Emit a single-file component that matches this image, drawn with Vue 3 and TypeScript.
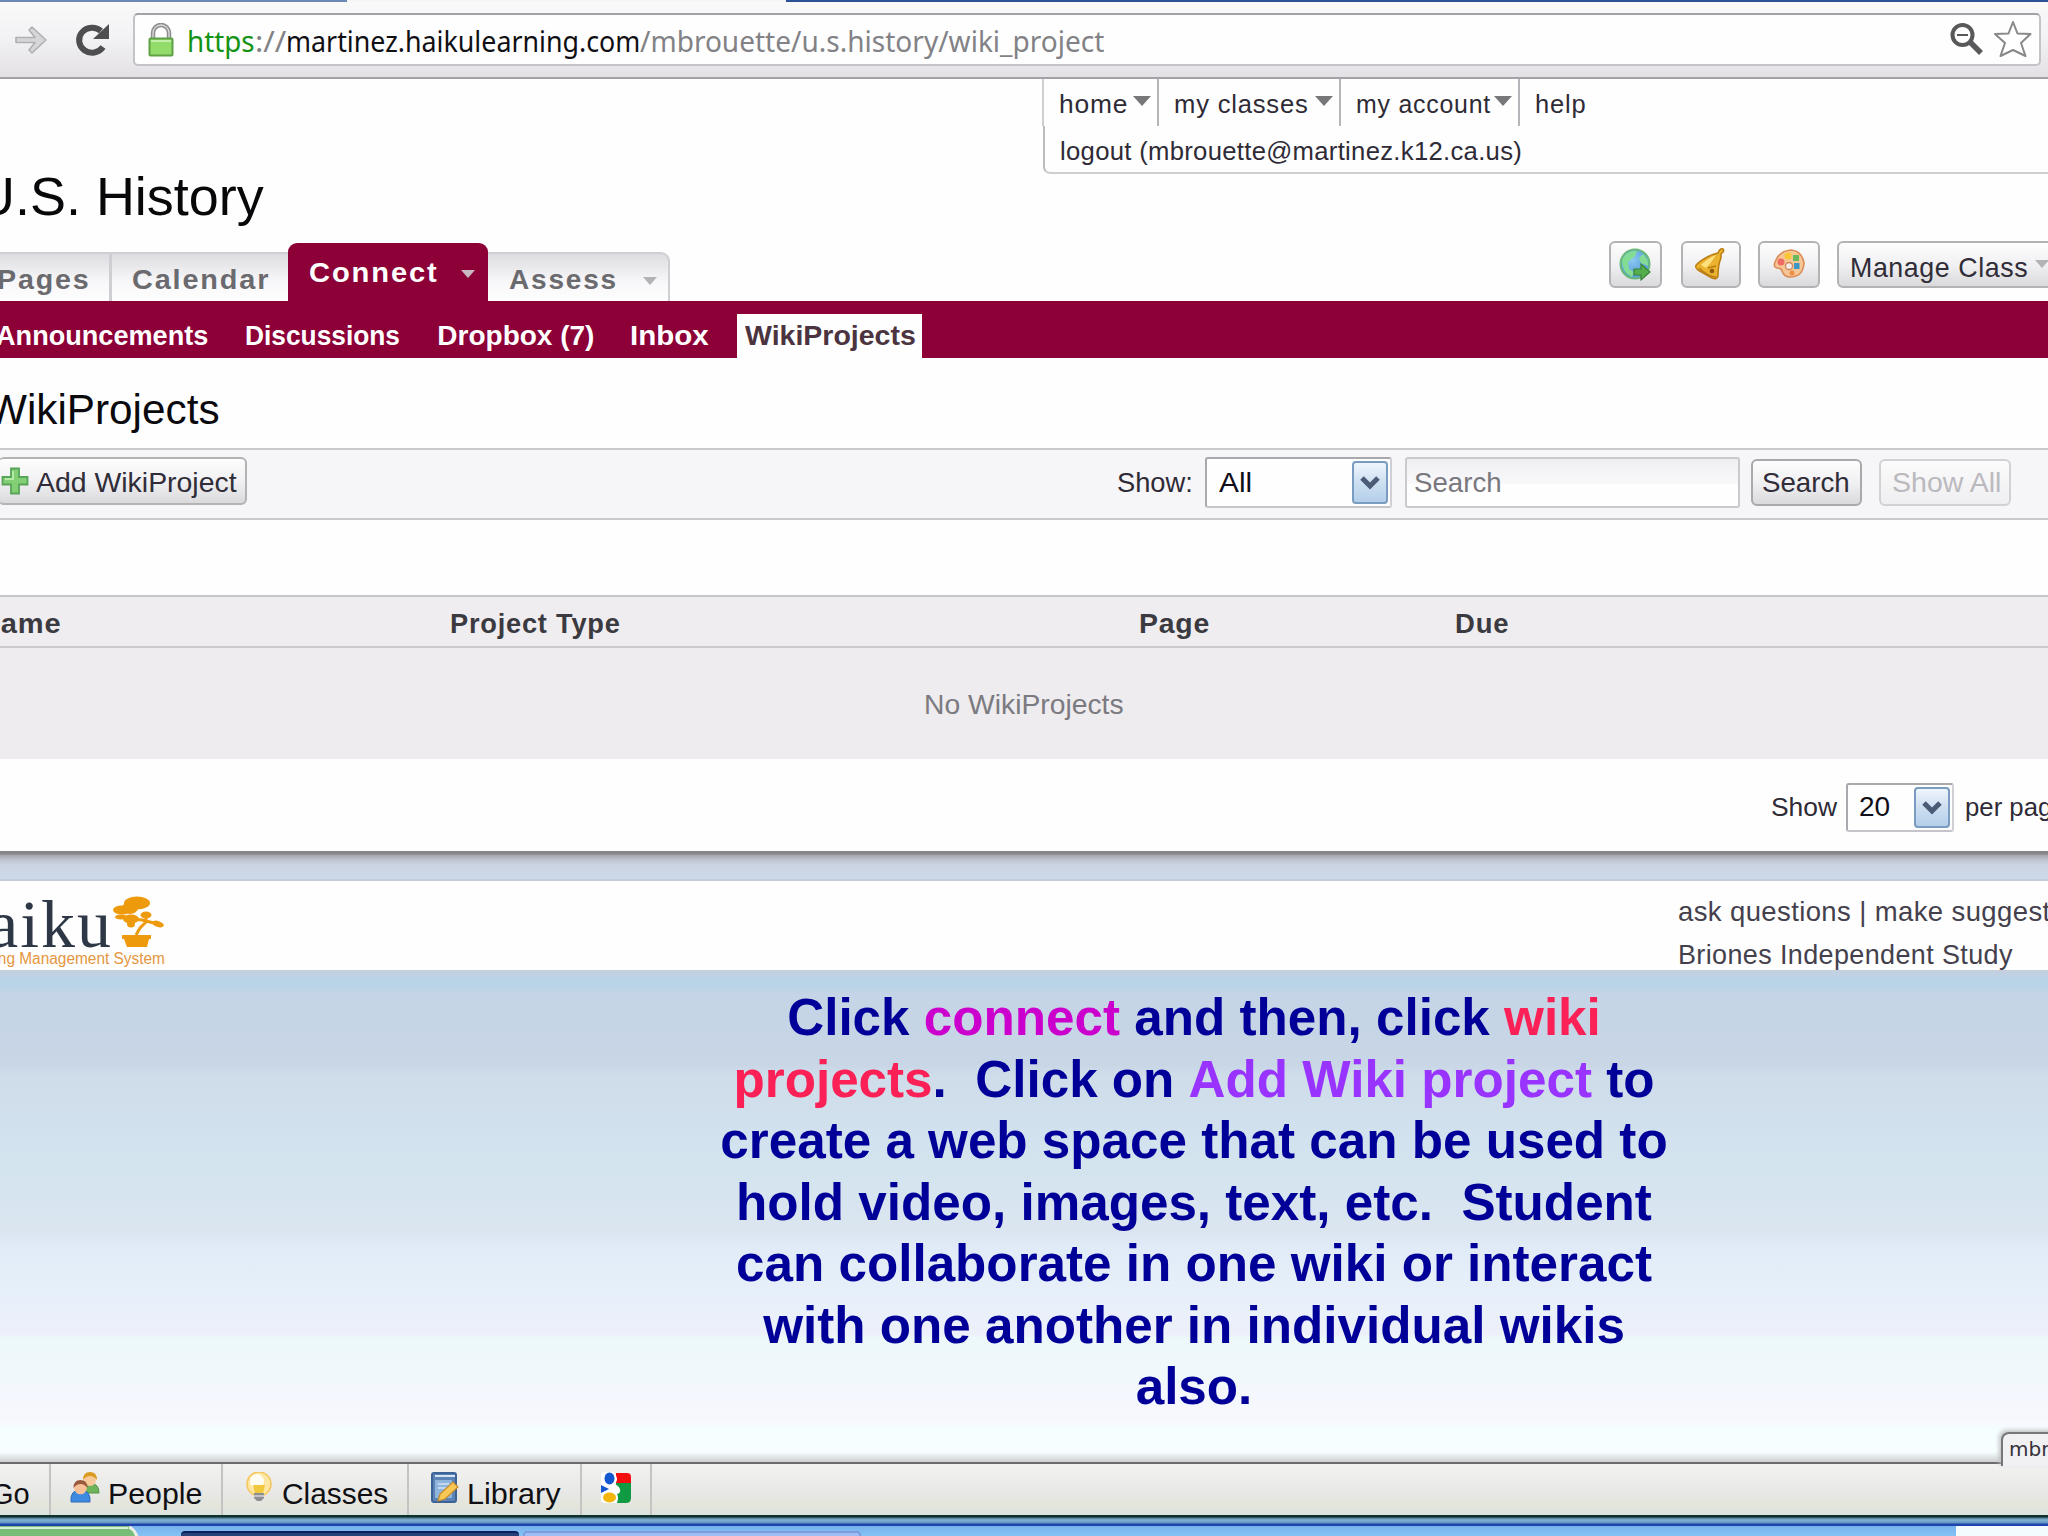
<script setup lang="ts">
import type { Directive } from 'vue'

// Condenses or widens a label so that it takes exactly the given width.
const vFit: Directive<HTMLElement, number> = {
  mounted(el, { value }) {
    const natural = el.offsetWidth
    el.style.transform = `scaleX(${value / natural})`
    el.style.marginRight = `${value - natural}px`
  },
}

interface Item { label: string; left: number; width: number }

const menu = [
  { label: 'home', left: 15, width: 69, cell: 115 },
  { label: 'my classes', left: 15, width: 135, cell: 182 },
  { label: 'my account', left: 15, width: 135, cell: 179 },
]
const sections: Item[] = [
  { label: 'Announcements', left: -4, width: 212 },
  { label: 'Discussions', left: 37, width: 155 },
  { label: 'Dropbox (7)', left: 37, width: 157 },
  { label: 'Inbox', left: 36, width: 79 },
]
</script>

<template>
  <div class="screen">
    <div class="chrome-top"><i class="t1"></i><i class="t2"></i><i class="t3"></i></div>
    <div class="chrome">
      <svg class="fwd" width="34" height="32" viewBox="0 0 34 32"><path d="M2 13.500h19l-6-7.500 3-3 14 13-14 13-3-3 6-7.500H2z" fill="#d6d5d8" stroke="#b1b0b4" stroke-width="1.600" stroke-linejoin="round" /></svg>
      <svg class="reload" width="36" height="34" viewBox="0 0 36 34"><path d="M28 24A13 12.5 0 1 1 26 8" fill="none" stroke="#4e4e50" stroke-width="6" /><path d="M34 1v15H18z" fill="#4e4e50" /></svg>
      <div class="url">
        <svg class="lock" width="26" height="36" viewBox="0 0 26 36"><path d="M5 16V10a8 8 0 0 1 16 0v6" fill="none" stroke="#8f8f91" stroke-width="4.5" /><path d="M5 16V10a8 8 0 0 1 16 0v6" fill="none" stroke="#dcdcdc" stroke-width="1.3" /><rect x="1.5" y="15.500" width="23" height="17" rx="1" fill="#92dc6c" stroke="#5fa044" stroke-width="2" /><path d="M3 18h20" stroke="#c3f0a8" stroke-width="2" /></svg>
        <span class="address"><b v-fit="68">https</b><i v-fit="31">://</i><em v-fit="354">martinez.haikulearning.com</em><i v-fit="464">/mbrouette/u.s.history/wiki_project</i></span>
        <svg class="mag" width="36" height="36" viewBox="0 0 36 36"><circle cx="13.500" cy="13" r="10" fill="#fff" stroke="#59595b" stroke-width="4" /><path d="M8 13h11" stroke="#59595b" stroke-width="2" /><path d="M21 20l11 11" stroke="#59595b" stroke-width="5.500" /></svg>
        <svg class="star" width="40" height="40" viewBox="0 0 40 40"><path d="M20 3l4.500 11.500 13 .5-9.500 9 4.500 13L20 31 7.500 37 12 24 2 15l13.500-.5z" fill="#fff" stroke="#88888b" stroke-width="2" stroke-linejoin="round" /></svg>
      </div>
    </div>

    <header>
      <nav class="account">
        <div class="account-row">
          <div v-for="m in menu" :key="m.label" class="cell" :style="{ width: m.cell + 'px' }">
            <span v-fit="m.width">{{ m.label }}</span><i class="tri"></i>
          </div>
          <div class="cell last"><span v-fit="51">help</span></div>
        </div>
        <div class="logout"><span v-fit="462">logout (mbrouette@martinez.k12.ca.us)</span></div>
      </nav>
      <h1><span v-fit="288">U.S. History</span></h1>
      <div class="tabrow">
        <div class="tab pages"><span v-fit="94">Pages</span></div>
        <div class="tab calendar"><span v-fit="138">Calendar</span></div>
        <div class="tab active"><span v-fit="130">Connect</span><i class="tri pale"></i></div>
        <div class="tab assess"><span v-fit="109">Assess</span><i class="tri grey"></i></div>
        <div class="tools">
          <div class="btn w53"><svg width="34" height="34" viewBox="0 0 34 34"><defs><radialGradient id="globe" cx=".4" cy=".35"><stop offset="0" stop-color="#8ec9f4" /><stop offset="1" stop-color="#5ba3d8" /></radialGradient></defs><circle cx="16" cy="16" r="14.500" fill="url(#globe)" stroke="#69ba78" stroke-width="2" /><path d="M3 12Q8 2 18 3l-2 5-7 6 1 7 5 3-2 5Q3 25 3 12zM20 10l4-4q6 5 5 12l-7-3z" fill="#83dc93" /><path d="M15 21h7v-5l9 8-9 8v-5h-7z" fill="#55ad4c" stroke="#398439" stroke-width="1.200" /></svg></div>
          <div class="btn w60"><svg width="34" height="34" viewBox="0 0 34 34"><path d="M27 6Q31 3 29 1q-3-1-5 4Q12 8 3 16q-3 3 1 6l14 8q5 2 6-2 0-11 3-18z" fill="#eab22f" stroke="#b97e12" stroke-width="1.500" /><path d="M22 7Q14 10 7 17l5 3q6-6 10-13z" fill="#ffe07c" /><path d="M5 20q9 9 17 9M14 20l8-2" fill="none" stroke="#b97e12" stroke-width="1.600" /><circle cx="18" cy="23" r="2.300" fill="#8f5b0c" /></svg></div>
          <div class="btn w62"><svg width="34" height="34" viewBox="0 0 34 34"><path d="M3 14Q7 3 19 2q11 1 13 13-1 14-14 14-6 0-8-6-1-3-5-3-4-1-2-6z" fill="#f7c695" stroke="#d98d57" stroke-width="1.600" /><circle cx="9" cy="14" r="3.500" fill="#ee6b63" /><circle cx="16" cy="8" r="3.500" fill="#fac636" /><rect x="21" y="7" width="6" height="6" fill="#69b859" /><rect x="22" y="15" width="5.500" height="6" fill="#3d97c6" /><circle cx="17" cy="18" r="3.500" fill="#f5eee8" stroke="#cb8459" stroke-width="1.300" /><circle cx="20" cy="25" r="2.500" fill="#ee8d48" /></svg></div>
          <div class="btn manage"><span v-fit="178">Manage Class</span><i class="tri grey"></i></div>
        </div>
      </div>
    </header>

    <nav class="sections">
      <span v-for="s in sections" :key="s.label" class="sec" :style="{ marginLeft: s.left + 'px' }"><span v-fit="s.width">{{ s.label }}</span></span>
      <span class="current"><span v-fit="171">WikiProjects</span></span>
    </nav>

    <h2><span v-fit="233">WikiProjects</span></h2>

    <div class="toolbar">
      <div class="btn add">
        <svg width="28" height="28" viewBox="0 0 28 28"><path d="M10 1.500h8V10h8.500v7.500H18v9h-8v-9H1.500V10H10z" fill="#83cf75" stroke="#58a458" stroke-width="1.800" /><path d="M12 4v8H4" fill="none" stroke="#b7eaa8" stroke-width="2" /></svg>
        <span v-fit="201">Add WikiProject</span>
      </div>
      <span class="show"><span v-fit="76">Show:</span></span>
      <div class="select all"><span v-fit="33">All</span><span class="drop"><svg width="20" height="15" viewBox="0 0 20 15"><path d="M2 3l8 8 8-8" fill="none" stroke="#4b5a75" stroke-width="5" /></svg></span></div>
      <div class="field"><span v-fit="88">Search</span></div>
      <div class="btn search"><span v-fit="88">Search</span></div>
      <div class="btn showall"><span v-fit="109">Show All</span></div>
    </div>

    <div class="thead">
      <span class="c1"><span v-fit="82">Name</span></span>
      <span class="c2"><span v-fit="171">Project Type</span></span>
      <span class="c3"><span v-fit="71">Page</span></span>
      <span class="c4"><span v-fit="54">Due</span></span>
    </div>
    <div class="empty"><span v-fit="200">No WikiProjects</span></div>

    <div class="pager">
      <span v-fit="66">Show</span>
      <div class="select count"><span v-fit="31">20</span><span class="drop"><svg width="20" height="15" viewBox="0 0 20 15"><path d="M2 3l8 8 8-8" fill="none" stroke="#4b5a75" stroke-width="5" /></svg></span></div>
      <span v-fit="102">per page</span>
    </div>
    <div class="band"></div>

    <footer>
      <div class="logo">
        <div class="wordmark">
          <span v-fit="161" class="name">haiku</span>
          <svg width="52" height="54" viewBox="0 0 52 54"><g fill="#ee9a0d"><ellipse cx="24" cy="8" rx="13" ry="6.500" /><ellipse cx="9" cy="15" rx="9" ry="4.500" /><ellipse cx="17" cy="13" rx="8" ry="6" /><ellipse cx="8" cy="22" rx="6" ry="2.500" /><ellipse cx="18" cy="24" rx="8" ry="4.500" /><ellipse cx="18" cy="29" rx="4" ry="3.500" /><ellipse cx="33" cy="20" rx="5.500" ry="3.500" /><ellipse cx="45" cy="29" rx="6" ry="3" transform="rotate(18 45 29)" /><path d="M9 40h29v4h-2l-2 8H14l-3-8H9z" /></g><path d="M19 24l10 1 16 4M33 20v7l-6 6-4 7" fill="none" stroke="#ee9a0d" stroke-width="3" /></svg>
        </div>
        <span v-fit="210" class="tagline">Learning Management System</span>
      </div>
      <div class="links">
        <span v-fit="425">ask questions | make suggestions</span>
        <span v-fit="335">Briones Independent Study</span>
      </div>
    </footer>

    <main>
      <p>Click <b class="magenta">connect</b> and then, click <b class="red">wiki</b><br><b class="red">projects</b>.&nbsp; Click on <b class="violet">Add Wiki project</b> to<br>create a web space that can be used to<br>hold video, images, text, etc.&nbsp; Student<br>can collaborate in one wiki or interact<br>with one another in individual wikis<br>also.</p>
      <div class="usertab">mbrouette</div>
    </main>

    <div class="dock">
      <div class="slot s1"><span v-fit="39">Go</span></div>
      <div class="slot s2">
        <svg width="30" height="32" viewBox="0 0 30 32"><path d="M14 21q0-10 7-10 8 1 8 10z" fill="#6eb45c" stroke="#549647" /><circle cx="20" cy="8" r="6" fill="#f6ca98" /><path d="M13 8q0-8 7-8t7 8q-3-4-7-4t-7 4z" fill="#d99b20" /><path d="M1 30q-1-12 9-12 11 0 10 12z" fill="#3f8be2" stroke="#2c69b8" /><circle cx="10.500" cy="16" r="6.300" fill="#f6c199" /><path d="M3.500 16q0-8 7-8t7 8q-3-4-7-4t-7 4z" fill="#9c5a3c" /></svg>
        <span v-fit="94">People</span>
      </div>
      <div class="slot s3">
        <svg width="28" height="32" viewBox="0 0 28 32"><circle cx="14" cy="12" r="12" fill="#ffe6a0" stroke="#f4c65e" stroke-width="1.500" /><circle cx="12" cy="9" r="7" fill="#fffdf2" /><path d="M8 13h12l-2 8h-8z" fill="#f1c73c" /><path d="M9 21h10v5l-3 3h-4l-3-3z" fill="#8c8e92" /><path d="M9 24h10" stroke="#d5d6d8" stroke-width="1.500" /></svg>
        <span v-fit="106">Classes</span>
      </div>
      <div class="slot s4">
        <svg width="28" height="32" viewBox="0 0 28 32"><rect x="1" y="1" width="24" height="29" rx="2" fill="#5b83b6" stroke="#3d6296" stroke-width="2" /><path d="M4 4h20" stroke="#d6e4f3" stroke-width="2" /><path d="M4 8h17v18H4z" fill="#90b5dc" /><path d="M7 12h11M7 16h8" stroke="#d2e3f4" stroke-width="1.500" /><path d="M7 29l2-7L22 10l5 5-13 12z" fill="#f8c754" stroke="#c68b2b" stroke-width="1.200" /></svg>
        <span v-fit="94">Library</span>
      </div>
      <div class="slot s5">
        <svg width="32" height="32" viewBox="0 0 32 32"><path d="M16 1h11q4 0 4 4v6H16z" fill="#f50d0d" /><path d="M16 11h15v15q0 5-5 5H16z" fill="#109a41" /><path d="M5 0h8q4 3 4 8-1 3-2 4 6 3 5 8-1 2-3 2 2 3 0 9H5q-4 0-4-4V4q0-4 4-4z" fill="#fff" /><ellipse cx="9.500" cy="6.500" rx="5" ry="6" fill="#1358cf" /><path d="M1 13l8 4-8 4z" fill="#1358cf" /><ellipse cx="9.500" cy="25.500" rx="6.500" ry="5" fill="#f4b50b" /></svg>
      </div>
    </div>
    <div class="frame"></div>
    <div class="taskbar">
      <svg class="start" width="145" height="11" viewBox="0 0 145 11"><path d="M0 0h130q5 3 7 11H0z" fill="#76bd78" /><path d="M0 2h128" stroke="#d8efd5" stroke-width="2" /><path d="M129 1q6 3 8 10" fill="none" stroke="#e9efe4" stroke-width="3" /></svg>
      <div class="task dark"></div>
      <div class="task light"></div>
      <div class="tray"></div>
    </div>
  </div>
</template>

<style>
html, body { margin: 0; overflow: hidden; background: #fff; }
</style>

<style scoped>
* { box-sizing: border-box; }
.screen { width: 2048px; height: 1536px; overflow: hidden; display: flex; flex-direction: column; background: #fefefe; font: 28px "Liberation Sans", Arial, sans-serif; color: #2e2b36; }
.screen > * { flex-shrink: 0; }
span { display: inline-block; white-space: nowrap; transform-origin: 0 50%; flex-shrink: 0; }
svg { display: block; flex-shrink: 0; }
h1, h2, p { margin: 0; font-weight: 400; }

.chrome-top { height: 2px; display: flex; }
.t1 { width: 347px; background: #6c88b4; }
.t2 { width: 439px; background: #f5f4f6; }
.t3 { flex: 1; background: #2c5196; }
.chrome { height: 77px; display: flex; align-items: flex-start; padding-top: 11px; background: linear-gradient(#faf9fa, #f3f2f4 45%, #e3e1e5); border-bottom: 2px solid #a3a2a6; }
.fwd { margin: 11px 0 0 14px; }
.reload { margin: 10px 0 0 27px; }
.url { margin-left: 22px; width: 1908px; height: 53px; display: flex; align-items: flex-start; background: #fefefe; border: 2px solid #c4c3c7; border-top-color: #a2a2a6; border-radius: 5px; }
.lock { margin: 8px 0 0 13px; }
.address { display: flex; margin-left: 13px; font: 29px/52px "Noto Sans", "DejaVu Sans Condensed", sans-serif; height: 49px; color: #828286; }
.address > * { font-style: normal; font-weight: 400; transform-origin: 0 50%; flex-shrink: 0; }
.address b { color: #149414; }
.address em { color: #101014; }
.mag { margin: 7px 0 0 auto; }
.star { margin: 4px 6px 0 8px; }

header { height: 222px; display: flex; flex-direction: column; }
.account { margin-left: 1042px; height: 95px; font-size: 26px; line-height: 50px; letter-spacing: .8px; }
.account-row { height: 47px; display: flex; border-left: 2px solid #cfced1; }
.cell { flex-shrink: 0; height: 47px; display: flex; padding-left: 15px; border-right: 2px solid #b6b5b9; justify-content: space-between; }
.cell:first-child { width: 115px; padding-left: 15px; }
.cell.last { border: 0; }
.tri { width: 0; height: 0; border: 9px solid transparent; border-bottom: 0; border-top: 10px solid #77777a; flex-shrink: 0; }
.cell .tri { margin: 17px 6px 0 0; }
.logout { margin-left: 1px; height: 48px; padding-left: 15px; border-left: 2px solid #bdbcc0; border-bottom: 2px solid #cfced2; border-bottom-left-radius: 7px; letter-spacing: .3px; }
h1 { margin-left: -24px; font-size: 53px; line-height: 45px; height: 45px; color: #08080a; }
.tabrow { height: 82px; display: flex; align-items: flex-end; font-weight: 700; color: #6b6a6f; line-height: 40px; }
.tabrow > *, .tools > * { flex-shrink: 0; }
.tab { height: 49px; padding-top: 6px; display: flex; border-top: 2px solid #d0cfd3; background: linear-gradient(#dddce0, #f8f7f9 60%, #fefefe); letter-spacing: 1.800px; }
.pages { width: 112px; border-right: 3px solid #cfced2; }
.pages span { margin-left: -3px; }
.calendar { width: 176px; padding-left: 20px; }
.active { width: 200px; height: 58px; padding: 10px 0 0 21px; background: #8d0037; border: 0; border-radius: 9px 9px 0 0; color: #fff; }
.assess { width: 182px; padding-left: 21px; border-right: 2px solid #cfced2; border-top-right-radius: 9px; }
.tri.pale { border-width: 8px 7px 0; border-top-color: #c9b9c0; margin: 17px 0 0 22px; }
.tri.grey { border-width: 8px 7px 0; border-top-color: #b3b2b6; margin: 17px 0 0 25px; }
.tools { display: flex; margin-left: 939px; height: 60px; font-weight: 400; }
.btn { flex-shrink: 0; display: flex; align-items: center; border: 2px solid #b3b2b5; border-radius: 6px; background: linear-gradient(#fdfdfd, #f1f0f2 50%, #dad9db); color: #302d38; }
.tools .btn { height: 47px; justify-content: center; }
.w53 { width: 53px; }
.w60 { width: 60px; margin-left: 19px; }
.w62 { width: 62px; margin-left: 17px; }
.tools .manage { width: 260px; margin-left: 17px; justify-content: flex-start; padding: 6px 0 0 11px; letter-spacing: .6px; }
.manage .tri.grey { margin: 0 0 8px 7px; }

.sections { height: 57px; display: flex; background: #8d0037; color: #fff; font-weight: 700; font-size: 28px; line-height: 44px; padding-top: 13px; }
.current { margin-left: 28px; width: 185px; height: 44px; padding-left: 8px; background: #fefefe; color: #4b3440; }
h2 { height: 90px; padding-top: 11px; font-size: 43px; line-height: 80px; color: #0a0a0e; }
h2 span { margin-left: -13px; }

.toolbar { height: 72px; display: flex; align-items: center; background: #f6f5f8; border-top: 2px solid #cac9cd; border-bottom: 2px solid #c9c8cb; padding-bottom: 4px; }
.toolbar > * { flex-shrink: 0; }
.toolbar .show > span, .select > span:first-child, .field span, .search span, .showall span { margin-top: 2px; }
.add { width: 249px; height: 48px; margin: -3px 0 0 -2px; border-left: 0; padding-left: 3px; }
.add span { margin-left: 7px; margin-top: 5px; }
.show { margin-left: 870px; }
.select { flex-shrink: 0; display: flex; align-items: center; background: #fefefe; border: 2px solid #a9a8ac; border-right-color: #d0cfd3; border-bottom-color: #c5c4c8; border-radius: 3px; color: #100e18; justify-content: space-between; }
.all { width: 187px; height: 51px; margin-left: 12px; padding: 0 2px 0 12px; }
.drop { width: 36px; height: 43px; display: flex; align-items: center; justify-content: center; border: 2px solid #7a9cc0; border-radius: 4px; background: linear-gradient(#eff5fc, #cddff1 50%, #b4cfea); }
.field { margin-left: 13px; width: 335px; height: 51px; display: flex; align-items: center; padding-left: 7px; border: 2px solid #cac9cd; border-radius: 3px; color: #79787e; background: linear-gradient(#efeef1, #f9f8fa 52%, #fefefe 54%); }
.search { margin-left: 11px; width: 111px; height: 47px; padding-left: 9px; border-color: #a9a8ab; }
.showall { margin-left: 17px; width: 132px; height: 47px; padding-left: 11px; border-color: #d2d1d4; color: #bab9bd; background: linear-gradient(#fbfbfc, #efeef0); }

.thead { margin-top: 75px; height: 53px; display: flex; background: #efedef; border-top: 2px solid #c7c6c9; border-bottom: 2px solid #cbcacd; font-weight: 700; color: #3b3a40; line-height: 54px; letter-spacing: .8px; }
.c1 { width: 471px; margin-left: -21px; }
.c2 { width: 689px; }
.c3 { width: 316px; }
.empty { height: 111px; padding-top: 2px; background: #eeecee; display: flex; align-items: center; justify-content: center; color: #7b7a80; }
.pager { height: 92px; display: flex; align-items: center; padding: 4px 0 0 1771px; font-size: 26px; }
.pager > span { margin-top: 1px; }
.count { width: 108px; height: 49px; margin: 0 11px 0 9px; padding: 0 2px 0 11px; font-size: 28px; }
.count > span:first-child { margin-top: 0; }
.count .drop { height: 41px; }
.band { height: 30px; background: linear-gradient(#868589 0 3px, #a3a3ab 4px, #bfc5d0 9px, #cbd4e2 14px, #cdd8ea 28px, #c5cbd6 28px); }
footer { height: 89px; display: flex; background: #fefefe; }
.logo { width: 1678px; flex-shrink: 0; display: flex; flex-direction: column; }
.wordmark { display: flex; height: 68px; }
.wordmark svg { margin: 14px 0 0 0; }
.name { margin-left: -48px; font: 68px/86px "Liberation Serif", serif; letter-spacing: 2px; height: 68px; color: #2d3746; }
.tagline { margin-left: -45px; font-size: 16px; line-height: 19px; color: #e59640; align-self: flex-start; }
.links { display: flex; flex-direction: column; align-items: flex-start; line-height: 42.500px; padding-top: 10px; color: #44414d; letter-spacing: .4px; }

main { position: relative; height: 492px; padding-top: 17px; background: linear-gradient(#c6cfde 0, #b9d4e7 9px, #bad4e7 16px, #c5d4e6 24px, #c8d6e6 95px, #cfdcea 105px, #d3e4ef 195px, #dbe5f0 262px, #e1ebf7 275px, #e7f0fa 330px, #edf0fa 364px, #edf8fa 368px, #f0f8fb 410px, #f5f7fe 425px, #f6f8fe 450px, #f5ffff 462px, #f7feff 482px, #d2d3d5 491px); }
p { width: 1000px; margin-left: 694px; text-align: center; font-weight: 700; font-size: 51.200px; line-height: 61.500px; color: #000099; }
.magenta { color: #cc00cc; }
.red { color: #fb2056; }
.violet { color: #9933ff; }
.usertab { position: absolute; left: 2001px; top: 462px; width: 60px; height: 34px; z-index: 1; padding-left: 6px; border: 2px solid #77777a; border-bottom: 0; border-top-left-radius: 8px; background: #f1f1f3; box-shadow: -2px -2px 4px #c2c2c4; font: 20px/31px "DejaVu Sans", sans-serif; color: #36333c; }
.dock { height: 53px; display: flex; border-top: 2px solid #6c6c6e; background: linear-gradient(#f2f2f1, #e8e8e7 55%, #e3e5da 85%, #dce3e1); color: #101014; font-size: 29px; }
.slot { flex-shrink: 0; height: 51px; display: flex; border-right: 2px solid #c4c4c4; line-height: 60px; }
.slot svg { margin-top: 8px; }
.s1 { width: 51px; }
.s1 span { margin-left: -9px; }
.s2 { width: 172px; padding-left: 19px; }
.s2 span { margin-left: 8px; }
.s3 { width: 186px; padding-left: 22px; }
.s3 span { margin-left: 9px; }
.s4 { width: 173px; padding-left: 22px; }
.s4 span { margin-left: 8px; }
.s5 { width: 70px; padding-left: 18px; }
.frame { height: 11px; background: linear-gradient(#0e302f 0 2px, #4f7d92 3px, #83b2d6 5px, #6193c0 8px, #1f44ad 9px 11px); }
.taskbar { height: 11px; display: flex; background: linear-gradient(#76b3ee, #86c3f4); }
.task { margin-top: 5px; height: 6px; }
.dark { margin-left: 36px; width: 338px; background: #27427b; border-top: 2px solid #0b1f5c; border-radius: 4px 4px 0 0; }
.light { margin-left: 4px; width: 338px; background: #9ebdf5; border: 2px solid #7f9ddd; border-bottom: 0; border-radius: 4px 4px 0 0; }
.tray { margin-left: auto; width: 92px; background: #f4fbff; }
</style>
